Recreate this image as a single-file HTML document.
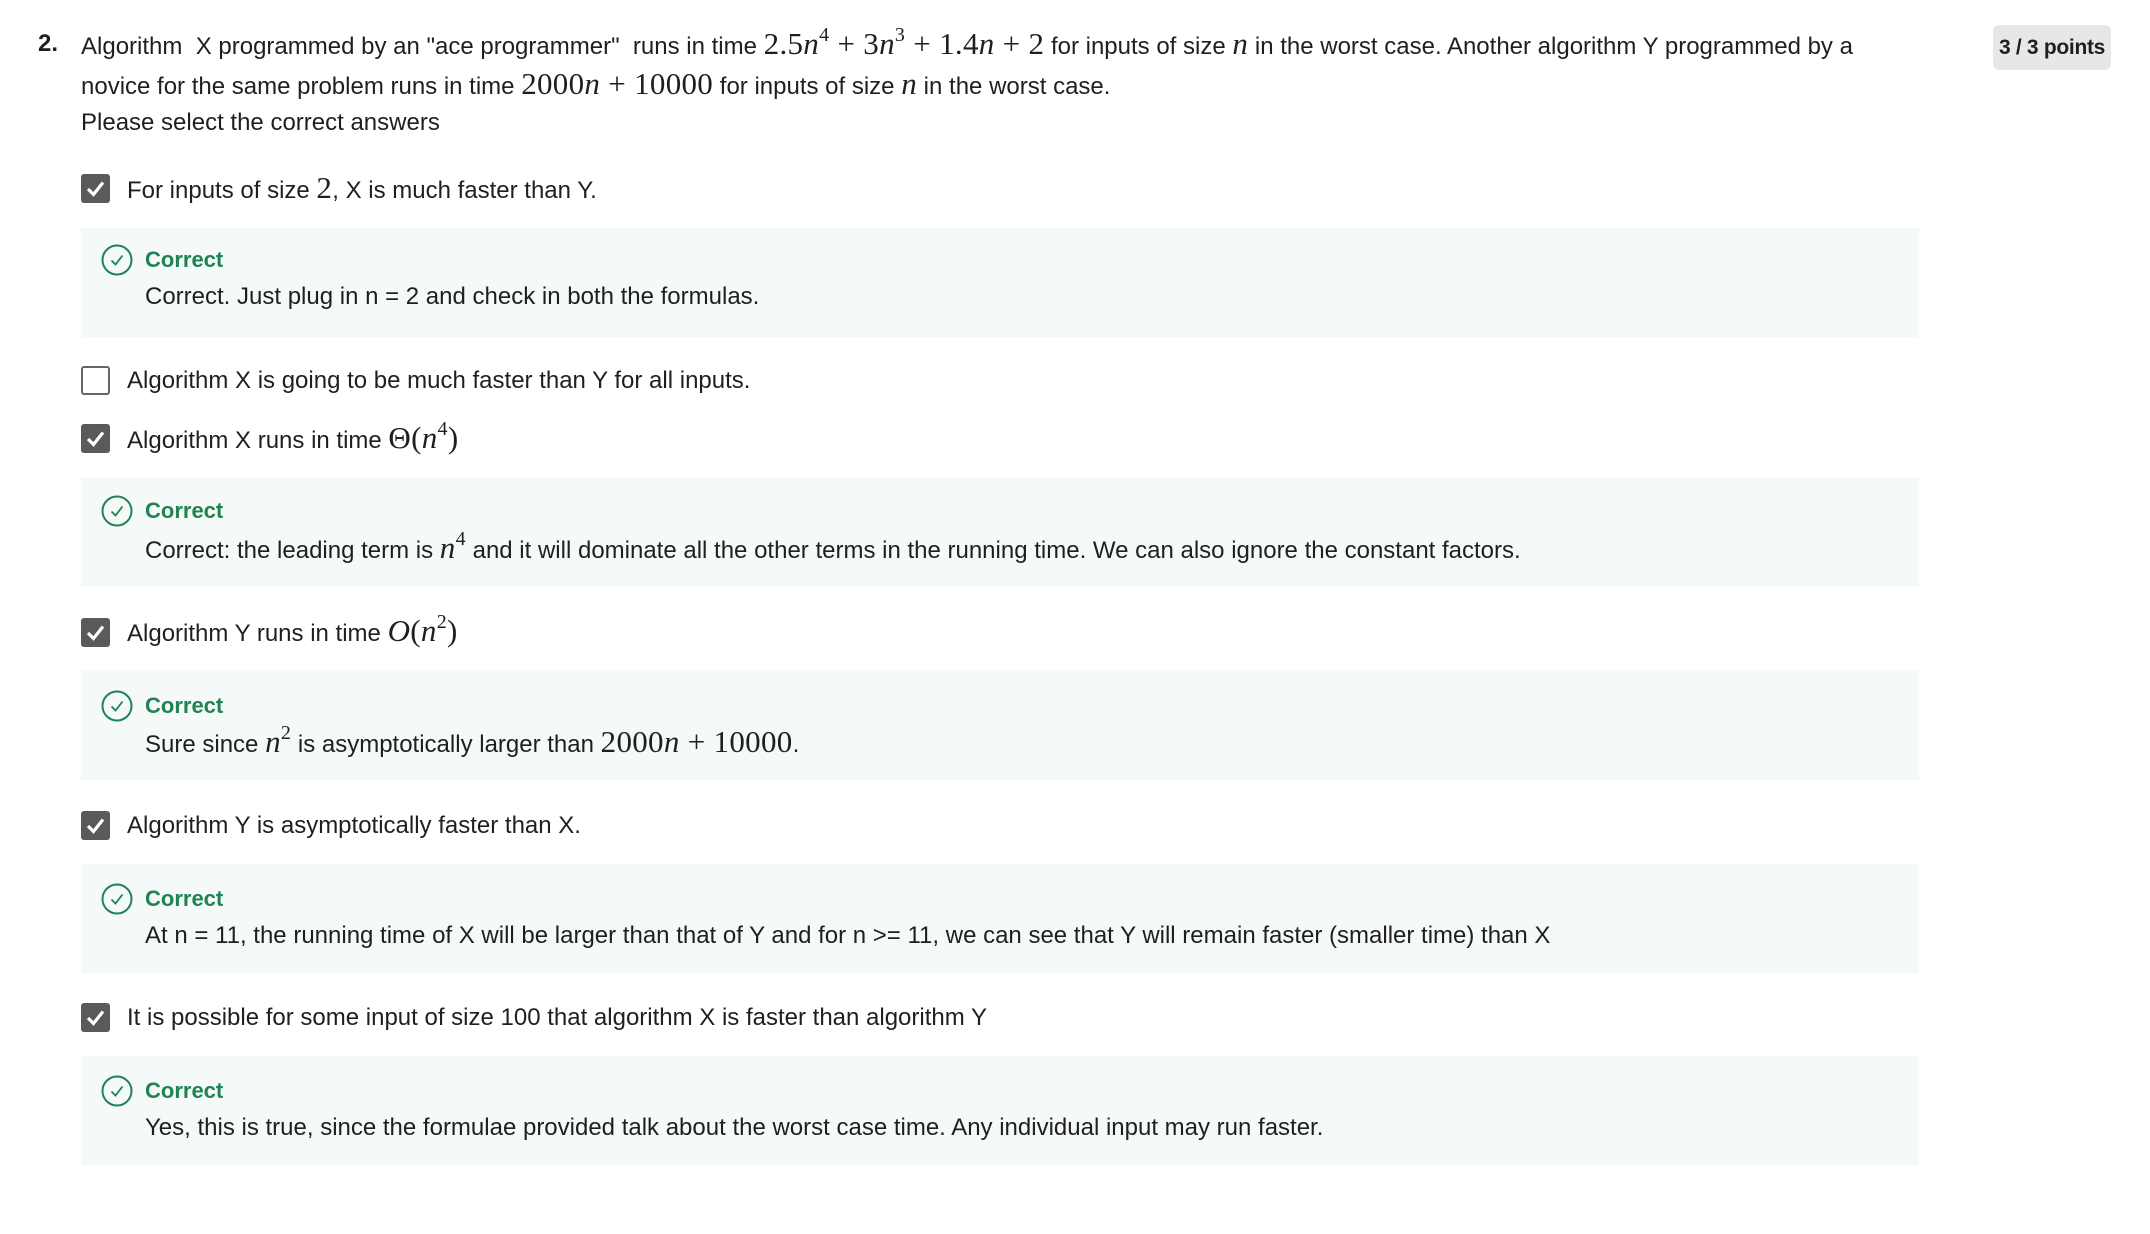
<!DOCTYPE html>
<html><head><meta charset="utf-8"><style>
html,body{margin:0;padding:0;background:#fff;}
body{width:2150px;height:1234px;position:relative;overflow:hidden;font-family:"Liberation Sans",sans-serif;color:#1f1f1f;}
.l{position:absolute;height:40px;line-height:40px;font-size:24px;white-space:nowrap;letter-spacing:0;}
.m{font-family:"Liberation Serif",serif;font-size:31px;letter-spacing:0.3px;}
.m i{font-style:italic;}
sup{font-size:20px;line-height:0;vertical-align:13px;}
.cb{position:absolute;left:81px;width:29px;height:29px;border-radius:3px;background:#5a5a5a;}
.cb svg{position:absolute;left:3px;top:3px;}
.ub{position:absolute;left:81px;width:25px;height:25px;border:2px solid #666;border-radius:3px;background:#fff;}
.box{position:absolute;left:81px;width:1838px;height:109px;background:#f5f9f8;}
.ic{position:absolute;left:101px;}
.cor{position:absolute;left:145px;font-weight:bold;color:#1f8354;font-size:22px;height:40px;line-height:40px;}
.badge{position:absolute;left:1993px;top:25px;width:118px;height:45px;background:#e6e7e8;border-radius:6px;font-weight:bold;font-size:21px;line-height:45px;text-align:center;letter-spacing:-0.3px;}
</style></head><body>
<div class="l" style="left:38px;top:24px;font-weight:bold;">2.</div>
<div class="l" style="left:81px;top:24px;">Algorithm&nbsp; X programmed by an "ace programmer"&nbsp; runs in time <span class="m">2.5<i>n</i><sup>4</sup> + 3<i>n</i><sup>3</sup> + 1.4<i>n</i> + 2</span> for inputs of size <span class="m"><i>n</i></span> in the worst case. Another algorithm Y programmed by a</div>
<div class="l" style="left:81px;top:64px;">novice for the same problem runs in time <span class="m">2000<i>n</i> + 10000</span> for inputs of size <span class="m"><i>n</i></span> in the worst case.</div>
<div class="l" style="left:81px;top:103px;">Please select the correct answers</div>
<div class="badge">3 / 3 points</div>

<svg width="0" height="0" style="position:absolute"><defs>
<symbol id="ck" viewBox="0 0 23 23"><path d="M4 12 L9.5 17.5 L19 5.5" fill="none" stroke="#fff" stroke-width="3.2"/></symbol>
<symbol id="ok" viewBox="0 0 32 32"><circle cx="16" cy="16" r="14.5" fill="none" stroke="#1f8354" stroke-width="2"/><path d="M10.5 16.5 L14.5 20.5 L21.5 11.5" fill="none" stroke="#1f8354" stroke-width="1.8"/></symbol>
</defs></svg>

<div class="cb" style="top:174px;"><svg width="23" height="23"><use href="#ck"/></svg></div>
<div class="l" style="left:127px;top:168px;">For inputs of size <span class="m">2</span>, X is much faster than Y.</div>
<div class="box" style="top:228px;"></div>
<svg class="ic" style="top:244px" width="32" height="32"><use href="#ok"/></svg>
<div class="cor" style="top:240px;">Correct</div>
<div class="l" style="left:145px;top:277px;">Correct. Just plug in n = 2 and check in both the formulas.</div>

<div class="ub" style="top:366px;"></div>
<div class="l" style="left:127px;top:361px;">Algorithm X is going to be much faster than Y for all inputs.</div>

<div class="cb" style="top:424px;"><svg width="23" height="23"><use href="#ck"/></svg></div>
<div class="l" style="left:127px;top:418px;">Algorithm X runs in time <span class="m">Θ(<i>n</i><sup>4</sup>)</span></div>
<div class="box" style="top:477px;height:110px;"></div>
<svg class="ic" style="top:495px" width="32" height="32"><use href="#ok"/></svg>
<div class="cor" style="top:491px;">Correct</div>
<div class="l" style="left:145px;top:528px;">Correct: the leading term is <span class="m"><i>n</i><sup>4</sup></span> and it will dominate all the other terms in the running time. We can also ignore the constant factors.</div>

<div class="cb" style="top:618px;"><svg width="23" height="23"><use href="#ck"/></svg></div>
<div class="l" style="left:127px;top:611px;">Algorithm Y runs in time <span class="m"><i>O</i>(<i>n</i><sup>2</sup>)</span></div>
<div class="box" style="top:670px;height:110px;"></div>
<svg class="ic" style="top:690px" width="32" height="32"><use href="#ok"/></svg>
<div class="cor" style="top:686px;">Correct</div>
<div class="l" style="left:145px;top:722px;">Sure since <span class="m"><i>n</i><sup>2</sup></span> is asymptotically larger than <span class="m">2000<i>n</i> + 10000</span>.</div>

<div class="cb" style="top:811px;"><svg width="23" height="23"><use href="#ck"/></svg></div>
<div class="l" style="left:127px;top:806px;">Algorithm Y is asymptotically faster than X.</div>
<div class="box" style="top:864px;height:109px;"></div>
<svg class="ic" style="top:883px" width="32" height="32"><use href="#ok"/></svg>
<div class="cor" style="top:879px;">Correct</div>
<div class="l" style="left:145px;top:916px;">At n = 11, the running time of X will be larger than that of Y and for n &gt;= 11, we can see that Y will remain faster (smaller time) than X</div>

<div class="cb" style="top:1003px;"><svg width="23" height="23"><use href="#ck"/></svg></div>
<div class="l" style="left:127px;top:998px;">It is possible for some input of size 100 that algorithm X is faster than algorithm Y</div>
<div class="box" style="top:1056px;height:109px;"></div>
<svg class="ic" style="top:1075px" width="32" height="32"><use href="#ok"/></svg>
<div class="cor" style="top:1071px;">Correct</div>
<div class="l" style="left:145px;top:1108px;">Yes, this is true, since the formulae provided talk about the worst case time. Any individual input may run faster.</div>
</body></html>
